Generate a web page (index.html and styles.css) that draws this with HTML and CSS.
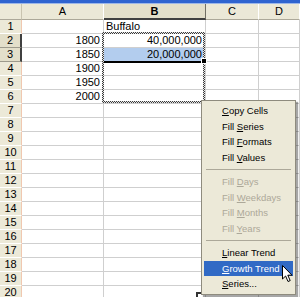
FILE: index.html
```html
<!DOCTYPE html>
<html>
<head>
<meta charset="utf-8">
<title>Fill handle menu</title>
<link rel="stylesheet" href="styles.css">
</head>
<body>
<div class="app">
	<div class="topbar"></div>
	<div class="sheet">
		<div class="corner"></div><div class="ch">A</div><div class="ch on">B</div><div class="ch">C</div><div class="ch">D</div>

		<div class="rh">1</div><div class="c"></div><div class="c">Buffalo</div><div class="c"></div><div class="c"></div>
		<div class="rh on">2</div><div class="c n">1800</div><div class="c n">40,000,000</div><div class="c"></div><div class="c"></div>
		<div class="rh on">3</div><div class="c n">1850</div><div class="c n sel">20,000,000</div><div class="c"></div><div class="c"></div>
		<div class="rh">4</div><div class="c n">1900</div><div class="c"></div><div class="c"></div><div class="c"></div>
		<div class="rh">5</div><div class="c n">1950</div><div class="c"></div><div class="c"></div><div class="c"></div>
		<div class="rh">6</div><div class="c n">2000</div><div class="c"></div><div class="c"></div><div class="c"></div>
		<div class="rh">7</div><div class="c"></div><div class="c"></div><div class="c"></div><div class="c"></div>
		<div class="rh">8</div><div class="c"></div><div class="c"></div><div class="c"></div><div class="c"></div>
		<div class="rh">9</div><div class="c"></div><div class="c"></div><div class="c"></div><div class="c"></div>
		<div class="rh">10</div><div class="c"></div><div class="c"></div><div class="c"></div><div class="c"></div>
		<div class="rh">11</div><div class="c"></div><div class="c"></div><div class="c"></div><div class="c"></div>
		<div class="rh">12</div><div class="c"></div><div class="c"></div><div class="c"></div><div class="c"></div>
		<div class="rh">13</div><div class="c"></div><div class="c"></div><div class="c"></div><div class="c"></div>
		<div class="rh">14</div><div class="c"></div><div class="c"></div><div class="c"></div><div class="c"></div>
		<div class="rh">15</div><div class="c"></div><div class="c"></div><div class="c"></div><div class="c"></div>
		<div class="rh">16</div><div class="c"></div><div class="c"></div><div class="c"></div><div class="c"></div>
		<div class="rh">17</div><div class="c"></div><div class="c"></div><div class="c"></div><div class="c"></div>
		<div class="rh">18</div><div class="c"></div><div class="c"></div><div class="c"></div><div class="c"></div>
		<div class="rh">19</div><div class="c"></div><div class="c"></div><div class="c"></div><div class="c"></div>
		<div class="rh">20</div><div class="c"></div><div class="c"></div><div class="c"></div><div class="c"></div>
	</div>

	<!-- selection, copy marquee and fill handle sit over the grid -->
	<div class="selbox"></div>
	<div class="marquee"></div>
	<div class="handle"></div>
	<div class="dragmark"></div>

	<ul class="menu">
		<li><u>C</u>opy Cells</li>
		<li>Fill <u>S</u>eries</li>
		<li>Fill <u>F</u>ormats</li>
		<li>Fill <u>V</u>alues</li>
		<li class="sep"></li>
		<li class="off">Fill <u>D</u>ays</li>
		<li class="off">Fill <u>W</u>eekdays</li>
		<li class="off">Fill <u>M</u>onths</li>
		<li class="off">Fill <u>Y</u>ears</li>
		<li class="sep"></li>
		<li><u>L</u>inear Trend</li>
		<li class="hot"><u>G</u>rowth Trend</li>
		<li><u>S</u>eries...</li>
	</ul>

	<svg class="cursor" width="12" height="18" viewBox="0 0 12 18">
		<path d="M0.5 0.5 L0.5 14 L3.6 11 L6 16.5 L8.2 15.6 L5.8 10.2 L10 10.2 Z" fill="#fff" stroke="#000" stroke-width="1" stroke-linejoin="miter"/>
	</svg>
</div>
</body>
</html>
```
FILE: styles.css
```css
* { padding: 0; margin: 0; box-sizing: border-box; }
li { list-style: none; }

body { background: #fff; font-family: "Liberation Sans", Arial, sans-serif; font-size: 11px; color: #000; }

.app { width: 300px; height: 297px; position: relative; overflow: hidden; }

.topbar { height: 4px; background: #2f64d0; border-bottom: 1px solid #9db7e8; }

.sheet { display: grid; grid-template-columns: 22px 82px 102px 53px 1fr; grid-template-rows: 16px; grid-auto-rows: 14px; }

.corner { background: #ece9d8; border-right: 1px solid #c9c4b0; border-bottom: 1px solid #aca899; }
.ch { background: #ebe8d7; border-right: 1px solid #fff; border-bottom: 1px solid #aca899; text-align: center; line-height: 15px; }
.ch.on { font-weight: bold; background: #e3dfca; border-right: 1px solid #716f64; border-bottom: 2px solid #404040; line-height: 14px; }

.rh { background: #ece9d8; border-right: 1px solid #f0c8b0; border-bottom: 1px solid #fff; text-align: center; line-height: 13px; }
.rh.on { background: #e3dfca; border-right: 2px solid #404040; border-bottom: 1px solid #9d9a8c; }

.c { border-right: 1px solid #cfcfcf; border-bottom: 1px solid #cfcfcf; padding: 0 3px 0 2px; line-height: 13px; white-space: nowrap; overflow: visible; }
.c.n { text-align: right; }
.c.sel { background: #b3cdee; }

.selbox { position: absolute; left: 102px; top: 32px; width: 103px; height: 31px; border: 2px solid #000; }

.marquee { position: absolute; left: 102px; top: 32px; width: 103px; height: 71px; border: 2px solid transparent;
	background: repeating-conic-gradient(#3a3a3a 0 25%, #e8e8e8 0 50%) 0 0 / 2px 2px border-box;
	-webkit-mask: linear-gradient(#000 0 0) content-box, linear-gradient(#000 0 0);
	-webkit-mask-composite: xor;
	mask-composite: exclude; }

.handle { position: absolute; left: 201px; top: 58px; width: 6px; height: 6px; background: #000; border: 1px solid #fff; }

.dragmark { position: absolute; left: 196px; top: 292px; width: 8px; height: 8px; border-left: 2px solid #333; border-top: 2px solid #333; }

.menu { position: absolute; left: 201px; top: 100px; width: 95px; padding: 2px; background: #ece9d8; border: 1px solid #8e8b7e;
	box-shadow: 2px 2px 1px rgba(0, 0, 0, 0.35); font-size: 9.5px; }
.menu li { height: 15.5px; line-height: 15.5px; padding-left: 18px; white-space: nowrap; }
.menu li.off { color: #aca899; }
.menu li.hot { background: #316ac5; color: #fff; }
.menu li.sep { height: 9px; padding: 4px 2px 0 2px; }
.menu li.sep:before { content: ""; display: block; height: 1px; background: #aca899; }

.cursor { position: absolute; left: 282px; top: 265px; }
```
